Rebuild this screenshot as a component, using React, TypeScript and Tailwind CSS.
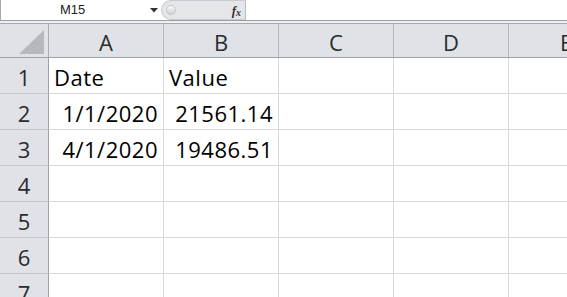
import React from 'react';

const columns = ['A', 'B', 'C', 'D', 'E'];

interface RowData {
  num: number;
  cells: { text: string; align: 'left' | 'right' }[];
}

const rows: RowData[] = [
  { num: 1, cells: [{ text: 'Date', align: 'left' }, { text: 'Value', align: 'left' }] },
  { num: 2, cells: [{ text: '1/1/2020', align: 'right' }, { text: '21561.14', align: 'right' }] },
  { num: 3, cells: [{ text: '4/1/2020', align: 'right' }, { text: '19486.51', align: 'right' }] },
  { num: 4, cells: [] },
  { num: 5, cells: [] },
  { num: 6, cells: [] },
  { num: 7, cells: [] },
];

const FormulaBar: React.FC = () => (
  <div className="flex h-[20px] bg-white border-l border-[#a9a9a9]">
    <div className="w-[145px] flex items-center pl-[59px] text-[13px] text-[#222] font-['Liberation_Sans',sans-serif]">
      M15
    </div>
    <div className="w-[15px] flex items-center justify-center">
      <svg width="8" height="5" viewBox="0 0 8 5">
        <path d="M0 0 H8 L4 4.5 Z" fill="#333" />
      </svg>
    </div>
    <div className="relative w-[85px] h-[20px] bg-[#e4e6e9] rounded-l-[10px] border border-[#c8cbd0] border-r-[#b9bcc0] flex items-center justify-end pr-[4px]">
      <div className="absolute left-[4px] top-[4px] w-[10px] h-[10px] rounded-full bg-gradient-to-b from-[#fafafa] to-[#cfd2d6] border border-[#c4c7cb]" />
      <span className="text-[13px] italic font-bold text-[#333] font-['Liberation_Serif',serif] leading-none">
        f<span className="text-[10px] relative top-[1px]">x</span>
      </span>
    </div>
    <div className="flex-1 bg-white" />
  </div>
);

const App: React.FC = () => {
  return (
    <div className="w-[567px] h-[297px] overflow-hidden bg-white font-['Open_Sans',sans-serif]">
      <FormulaBar />
      <div className="h-[1px] bg-[#9a9ea3]" />
      <div className="h-[2px] bg-[#eef0f2]" />
      <div className="h-[1px] bg-[#a6a9ad]" />

      {/* column headers */}
      <div className="flex h-[34px] bg-[#dfe3e8] border-b border-[#9da0a4]">
        <div className="relative w-[49px] shrink-0 border-r border-[#a9acb0]">
          <svg className="absolute left-[19px] top-[6px]" width="26" height="25" viewBox="0 0 26 25">
            <path d="M0 24 L25 0 V24 Z" fill="#b5b9bd" />
          </svg>
        </div>
        {columns.map((c) => (
          <div
            key={c}
            className="w-[115px] shrink-0 border-r border-[#b4b7bb] flex items-center justify-center pt-[4px] text-[22px] text-[#2b2b2b]"
          >
            {c}
          </div>
        ))}
      </div>

      {rows.map((r) => (
        <div key={r.num} className="flex h-[36px]">
          <div className="w-[49px] shrink-0 bg-[#dfe3e8] border-r border-[#9da0a4] border-b border-b-[#c2c5c9] flex items-end justify-center pb-[3px] text-[22px] leading-[26px] text-[#2b2b2b]">
            {r.num}
          </div>
          {columns.map((c, i) => {
            const cell = r.cells[i];
            return (
              <div
                key={c}
                className={`w-[115px] shrink-0 border-r border-b border-[#d9d9d9] flex items-end pb-[3px] px-[5px] text-[22px] leading-[26px] tracking-[0.5px] text-black ${
                  cell && cell.align === 'right' ? 'justify-end' : 'justify-start'
                }`}
              >
                {cell ? cell.text : ''}
              </div>
            );
          })}
        </div>
      ))}
    </div>
  );
};

export default App;
